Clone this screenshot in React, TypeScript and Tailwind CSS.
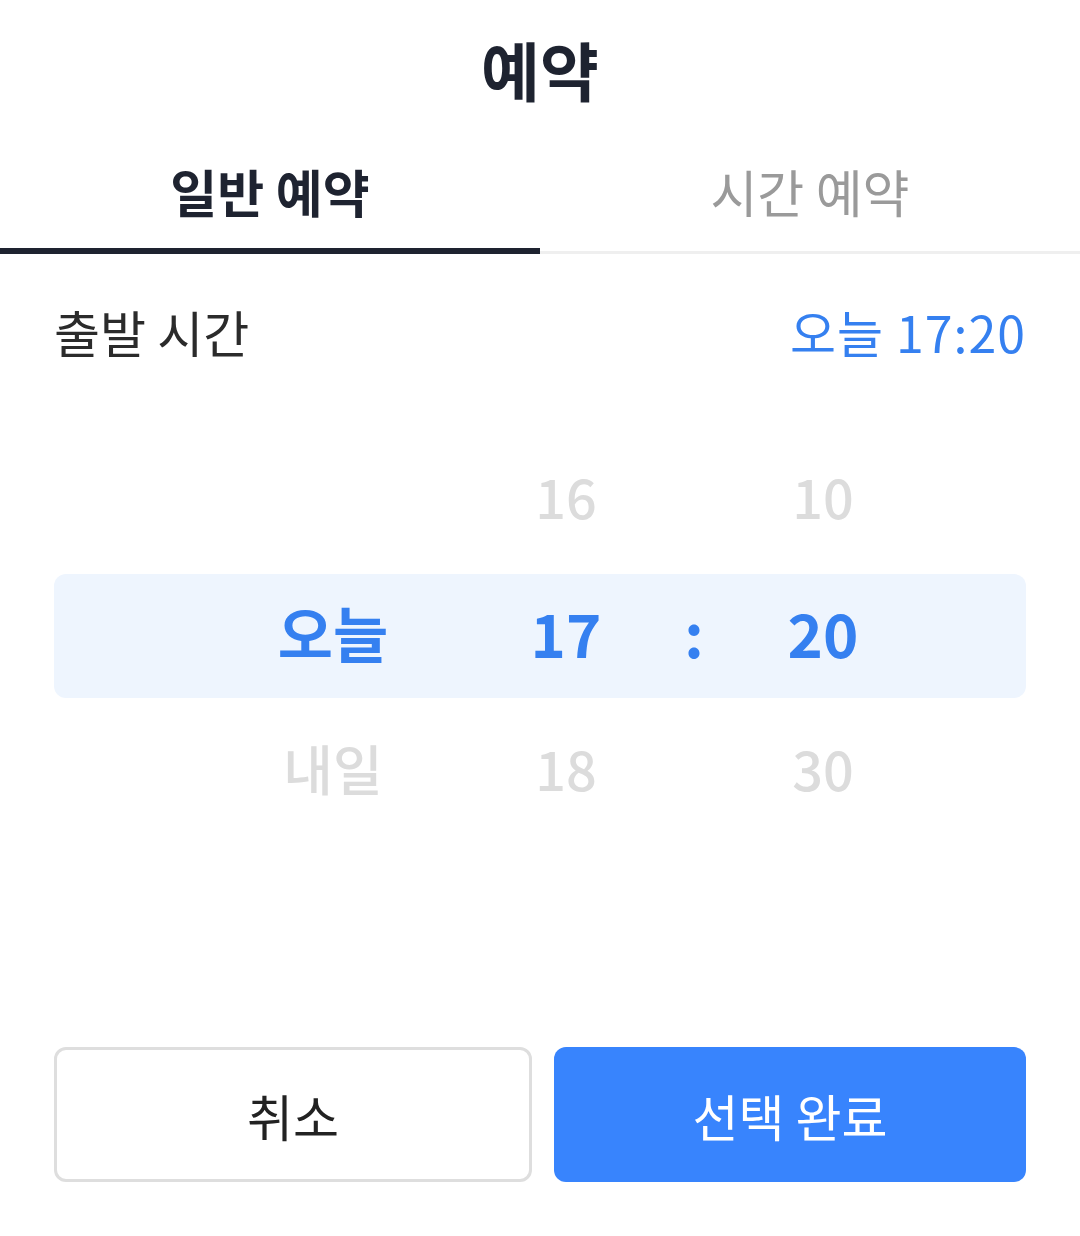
import React from "react";

type Cell = { day: string; hour: string; colon: string; minute: string };

function PickerRow({ cell, active }: { cell: Cell; active?: boolean }) {
    const tone = active
        ? "text-[#3580f0] font-semibold text-[60px]"
        : "text-[#dcdcdc] font-medium text-[54px]";
    return (
        <div
            className={
                "flex items-center leading-none pb-[8px] " +
                tone +
                (active ? " h-[124px] my-[6px] rounded-[12px] bg-[#eef5fe]" : " h-[136px]")
            }
        >
            <div className="w-[179px]" />
            <div className="w-[200px] text-center">{cell.day}</div>
            <div className="w-[68px]" />
            <div className="w-[130px] text-center">{cell.hour}</div>
            <div className="w-[126px] text-center">{cell.colon}</div>
            <div className="w-[132px] text-center">{cell.minute}</div>
        </div>
    );
}

export default function App() {
    const rows: Cell[] = [
        { day: "", hour: "16", colon: "", minute: "10" },
        { day: "오늘", hour: "17", colon: ":", minute: "20" },
        { day: "내일", hour: "18", colon: "", minute: "30" },
    ];

    return (
        <div className="w-[1080px] h-[1236px] bg-white flex flex-col font-['Noto_Sans_CJK_KR','Noto_Sans',sans-serif]">
            {/* title */}
            <div className="h-[140px] flex items-center justify-center pb-[4px] text-[64px] leading-none font-bold text-[#1e2330]">
                예약
            </div>

            {/* tabs */}
            <div className="flex h-[114px]">
                <div className="flex-1 flex flex-col">
                    <div className="flex-1 flex items-center justify-center pb-[6px] text-[51px] leading-none font-bold text-[#1e2330]">
                        일반 예약
                    </div>
                    <div className="h-[6px] bg-[#1e2330]" />
                </div>
                <div className="flex-1 flex flex-col">
                    <div className="flex-1 flex items-center justify-center pb-[6px] text-[51px] leading-none text-[#9a9a9a]">
                        시간 예약
                    </div>
                    <div className="h-[6px] flex items-end">
                        <div className="h-[3px] w-full bg-[#efefef]" />
                    </div>
                </div>
            </div>

            {/* departure */}
            <div className="h-[158px] px-[54px] pb-[4px] flex items-center justify-between text-[50px] leading-none">
                <span className="text-[#2b2b2b]">출발 시간</span>
                <span className="text-[#3580f0] tracking-[1px]">오늘 17:20</span>
            </div>

            {/* wheel */}
            <div className="pt-[20px] px-[54px] flex flex-col">
                {rows.map((r, i) => (
                    <PickerRow key={i} cell={r} active={i === 1} />
                ))}
            </div>

            {/* actions */}
            <div className="mt-[207px] px-[54px] flex gap-[22px]">
                <button className="flex-1 h-[135px] rounded-[12px] border-[3px] border-[#dedede] bg-white text-[50px] leading-none text-[#222222]">
                    취소
                </button>
                <button className="flex-1 h-[135px] rounded-[12px] bg-[#3884fd] text-[50px] leading-none text-white">
                    선택 완료
                </button>
            </div>
        </div>
    );
}
